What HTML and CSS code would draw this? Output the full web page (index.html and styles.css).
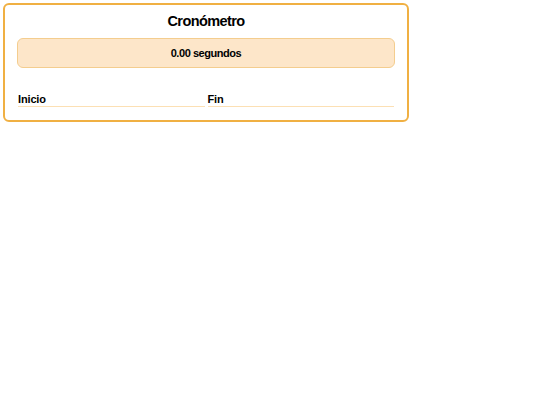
FILE: index.html
```html
<!DOCTYPE html>
<html lang="es">
<head>
<meta charset="utf-8">
<title>Cronómetro</title>
<link rel="stylesheet" href="styles.css">
</head>
<body>
<div class="card">
  <h1 class="title">Cronómetro</h1>
  <div class="display">0.00 segundos</div>
  <table class="laps">
    <thead>
      <tr><th>Inicio</th><th>Fin</th></tr>
    </thead>
    <tbody></tbody>
  </table>
</div>
</body>
</html>
```
FILE: styles.css
```css
html, body {
  margin: 0;
  padding: 0;
  background: #ffffff;
  font-family: "Liberation Sans", Arial, sans-serif;
  color: #000;
}
.card {
  box-sizing: border-box;
  width: 406px;
  margin: 3px;
  border: 2px solid #f0b043;
  border-radius: 6px;
  padding: 6px 12px 13px 12px;
}
.title {
  margin: 0;
  text-align: center;
  font-size: 14.5px;
  letter-spacing: -0.6px;
  font-weight: bold;
  line-height: 20px;
}
.display {
  margin-top: 7px;
  box-sizing: border-box;
  height: 30px;
  line-height: 28px;
  background: #fde6c9;
  border: 1px solid #f4cd8e;
  border-radius: 6px;
  text-align: center;
  font-size: 11px;
  letter-spacing: -0.45px;
  font-weight: bold;
}
.laps {
  margin-top: 24px;
  border-collapse: separate;
  border-spacing: 3px 0;
  margin-left: -2px;
  width: calc(100% + 4px);
}
.laps th {
  text-align: left;
  font-size: 11px;
  letter-spacing: -0.15px;
  font-weight: bold;
  padding: 0;
  line-height: 14px;
  border-bottom: 1px solid #fce0b4;
  width: 50%;
}
```
